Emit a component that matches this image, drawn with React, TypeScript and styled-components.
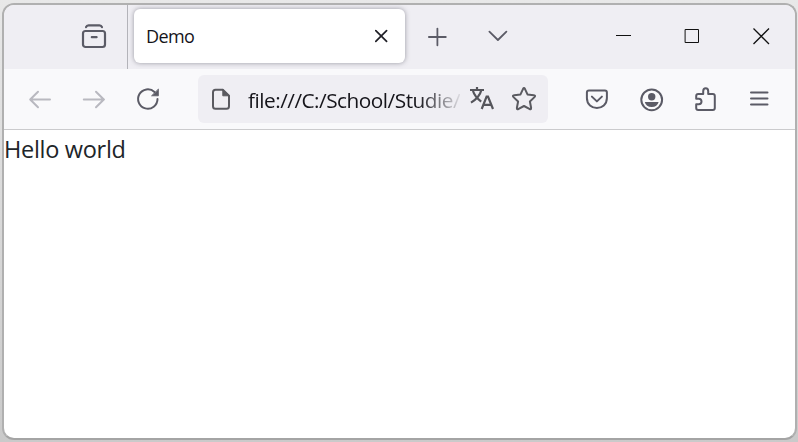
import React from "react";
import styled, { createGlobalStyle } from "styled-components";

const GlobalStyle = createGlobalStyle`
  * { box-sizing: border-box; }
  body { margin: 0; overflow: hidden; font-family: "Open Sans", "Noto Sans", sans-serif; }
`;

const Desktop = styled.div`
  width: 798px;
  height: 442px;
  padding: 3px 1px 2px 2px;
  background: linear-gradient(#e8e8e8, #cacaca);
`;

const BrowserWindow = styled.main`
  width: 795px;
  height: 437px;
  display: flex;
  flex-direction: column;
  border: 2px solid #b0b0b0;
  border-bottom-color: #a4a4a4;
  border-radius: 12px;
  overflow: hidden;
  background: #fff;
`;

const TabBar = styled.header`
  height: 64px;
  flex: none;
  display: flex;
  background: #efeef3;
`;

const LibraryArea = styled.div`
  width: 124px;
  height: 64px;
  padding: 15px 0 0 74px;
  border-right: 1px solid #b3b3b9;
`;

const Tab = styled.div`
  width: 271px;
  height: 54px;
  margin: 4px 0 0 6px;
  padding: 0 8px 0 12px;
  display: flex;
  align-items: center;
  justify-content: space-between;
  border-radius: 6px;
  background: #fff;
  box-shadow: 0 0 5px rgba(80, 80, 95, 0.55);
`;

const TabTitle = styled.span`
  font-size: 18px;
  line-height: 24px;
  letter-spacing: -0.6px;
  color: #15141a;
`;

const TabActions = styled.div`
  display: flex;
  gap: 28px;
  margin: 15px 0 0 16px;
`;

const WindowControls = styled.div`
  display: flex;
  gap: 37px;
  margin: 15px 17px 0 auto;
`;

const Toolbar = styled.nav`
  height: 61px;
  flex: none;
  display: flex;
  align-items: flex-start;
  padding: 6px 20px 0;
  background: #f9f9fb;
  border-bottom: 1px solid #cbcbcd;
`;

const IconGroup = styled.div<{ $gap: number; $push?: boolean }>`
  display: flex;
  gap: ${(p) => p.$gap}px;
  padding-top: 8px;
  margin-left: ${(p) => (p.$push ? "auto" : "0")};
`;

const AddressBar = styled.div`
  width: 350px;
  height: 48px;
  margin-left: 34px;
  padding: 0 8px 0 7px;
  display: flex;
  align-items: center;
  border-radius: 6px;
  background: #efeef3;
`;

const Url = styled.span`
  width: 212px;
  margin: 2px 6px 0 11px;
  overflow: hidden;
  white-space: nowrap;
  font-size: 20.8px;
  line-height: 30px;
  letter-spacing: -0.5px;
  color: #15141a;
  mask-image: linear-gradient(to right, #000 170px, transparent 216px);
`;

const AddressActions = styled.div`
  display: flex;
  gap: 10px;
`;

const Page = styled.section`
  flex: 1;
  font-size: 23.5px;
  line-height: 32px;
  padding-top: 3px;
  letter-spacing: -0.3px;
  color: #212529;
`;

const Glyph = styled.svg<{ $color?: string; $weight?: number }>`
  display: block;
  flex: none;
  width: 32px;
  height: 32px;
  fill: none;
  stroke: ${(p) => p.$color ?? "#5b5b66"};
  stroke-width: ${(p) => p.$weight ?? 2};
  stroke-linecap: round;
  stroke-linejoin: round;
`;

type IconProps = { color?: string; weight?: number; children: React.ReactNode };
const Icon = ({ color, weight, children }: IconProps) => (
  <Glyph viewBox="0 0 32 32" $color={color} $weight={weight} aria-hidden="true">
    {children}
  </Glyph>
);

export default function App() {
  return (
    <>
      <GlobalStyle />
      <Desktop>
        <BrowserWindow>
          <TabBar>
            <LibraryArea>
              <Icon weight={2.2}>
                <rect x="5" y="11" width="22" height="16" rx="2.5" />
                <path d="M8 7.2Q8.7 5.3 10.5 5.3H21.5Q23.3 5.3 24 7.2M13.8 17.2H18.6" />
              </Icon>
            </LibraryArea>
            <Tab>
              <TabTitle>Demo</TabTitle>
              <Icon color="#202027" weight={1.7}>
                <path d="M10.8 10.6 21.6 21.4M21.6 10.6 10.8 21.4" />
              </Icon>
            </Tab>
            <TabActions>
              <Icon weight={1.8}>
                <path d="M7.9 17H24.8M16.4 8.6V25.3" />
              </Icon>
              <Icon weight={1.8}>
                <path d="M8.4 11.6 16.9 20 25.4 11.6" />
              </Icon>
            </TabActions>
            <WindowControls>
              <Icon color="#111" weight={1}>
                <path strokeLinecap="butt" d="M8 15.5H23" />
              </Icon>
              <Icon color="#111" weight={1}>
                <path strokeLinejoin="miter" d="M8.5 9.5H21.5V22.5H8.5Z" />
              </Icon>
              <Icon color="#111" weight={1.3}>
                <path strokeLinecap="butt" d="M7.5 8.5 23 24M23 8.5 7.5 24" />
              </Icon>
            </WindowControls>
          </TabBar>
          <Toolbar>
            <IconGroup $gap={22}>
              <Icon color="#b9b9c0">
                <path d="M26 16.5H6.5M14 8.7 6.2 16.5 14 24.3" />
              </Icon>
              <Icon color="#b9b9c0">
                <path d="M5.8 16.5H26M18 8.7 25.8 16.5 18 24.3" />
              </Icon>
              <Icon>
                <path d="M25.5 16A9.7 9.7 0 1 1 22.5 9" />
                <path fill="#5b5b66" strokeWidth=".8" d="M26.4 6.4V12.8H19.9Z" />
              </Icon>
            </IconGroup>
            <AddressBar>
              <Icon color="#5a5a60">
                <path d="M17.8 6.8H10.5Q8 6.8 8 9.3V23.2Q8 25.7 10.5 25.7H21.5Q24 25.7 24 23.2V12.8Z" />
                <path fill="#5a5a60" strokeWidth="1" d="M17.8 7V12.8H23.8Z" />
              </Icon>
              <Url>file:///C:/School/Studie/</Url>
              <AddressActions>
                <Icon color="#55555b" weight={2.2}>
                  <g strokeLinecap="butt" strokeLinejoin="miter">
                    <path d="M4 7H18M11 4V7M7 8C8.2 12 11.5 15.8 15.2 18.6M15.2 7.5C14 12.3 10.5 16.3 5 19.6" />
                    <path d="M15.7 26 20.6 13.6H22L27 26M17.5 21.9H25.2" />
                  </g>
                </Icon>
                <Icon color="#5a5a60">
                  <path d="M15.1 5.8Q16 4.1 16.9 5.8L19.5 11.4 25.8 12.2Q28 12.6 26.5 14.1L21.9 18.5 23.1 24.8Q23.3 27 21.4 25.9L16 23 10.6 25.9Q8.7 27 8.9 24.8L10.1 18.5 5.5 14.1Q4 12.6 6.2 12.2L12.5 11.4Z" />
                </Icon>
              </AddressActions>
            </AddressBar>
            <IconGroup $gap={22} $push>
              <Icon>
                <path d="M7.9 7.5H23.9Q25.9 7.5 25.9 9.5V15C25.9 28.3 5.9 28.3 5.9 15V9.5Q5.9 7.5 7.9 7.5ZM10.9 13.6 15.9 18.4 20.9 13.6" />
              </Icon>
              <Icon>
                <circle cx="16.7" cy="16.8" r="10.4" />
                <circle cx="16.7" cy="13.7" r="3.7" fill="#5b5b66" stroke="none" />
                <path d="M9.8 19H23.6Q22.3 24 16.7 24T9.8 19Z" fill="#5b5b66" stroke="none" />
              </Icon>
              <Icon>
                <path d="M9.2 11H14.2V8.2Q14.2 5.2 16.7 5.2T19.2 8.2V11H23.8Q25.8 11 25.8 13V25Q25.8 27 23.8 27H9.2Q7.2 27 7.2 25V21.2H9.8Q12.5 21.2 12.5 18.5T9.8 15.8H7.2V13Q7.2 11 9.2 11Z" />
              </Icon>
              <Icon>
                <path d="M8 9.5H24.5M8 15.6H24.5M8 21.6H24.5" />
              </Icon>
            </IconGroup>
          </Toolbar>
          <Page>Hello world</Page>
        </BrowserWindow>
      </Desktop>
    </>
  );
}
